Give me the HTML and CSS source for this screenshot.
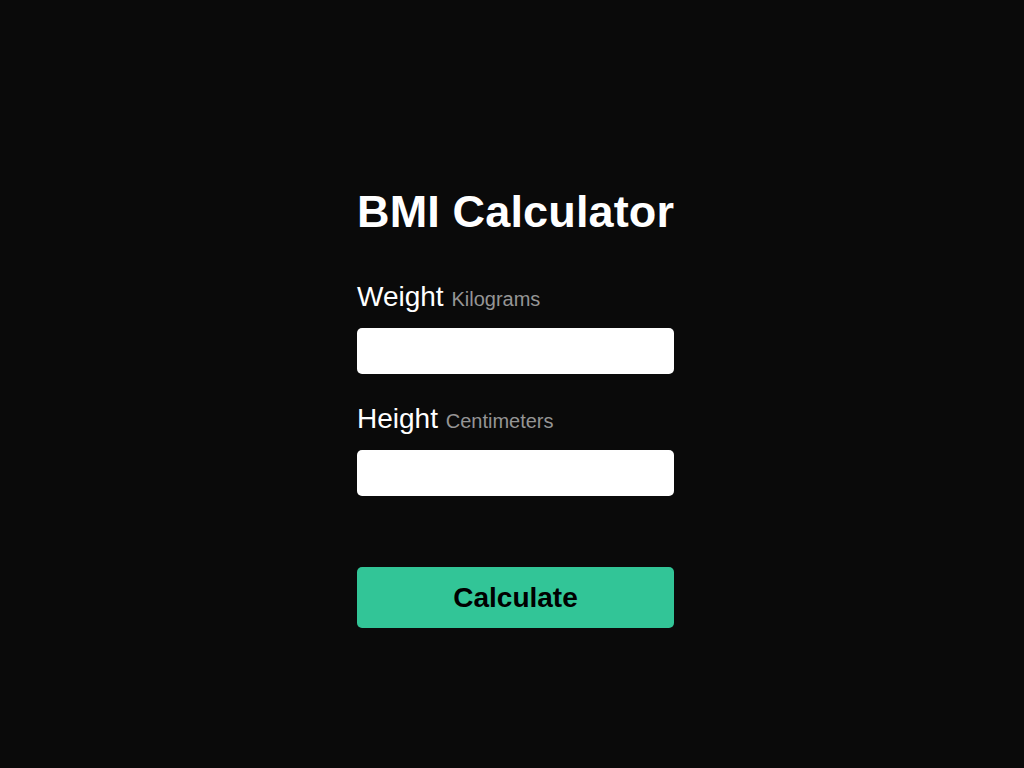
FILE: index.html
```html
<!DOCTYPE html>
<html lang="en">
<head>
<meta charset="utf-8">
<title>BMI Calculator</title>
<link rel="stylesheet" href="styles.css">
</head>
<body>
<main class="page">
  <form class="calc">
    <h1 class="title">BMI Calculator</h1>
    <div class="field">
      <label class="label" for="weight">Weight <span class="hint">Kilograms</span></label>
      <input class="input" id="weight" type="text">
    </div>
    <div class="field">
      <label class="label" for="height">Height <span class="hint">Centimeters</span></label>
      <input class="input" id="height" type="text">
    </div>
    <button class="button" type="button">Calculate</button>
  </form>
</main>
</body>
</html>
```
FILE: styles.css
```css
html, body {
  margin: 0;
  padding: 0;
  background: #0a0a0a;
}

body {
  font-family: "Liberation Sans", Arial, Helvetica, sans-serif;
  color: #ffffff;
}

.page {
  display: flex;
  justify-content: center;
  padding: 189px 0 0 7px;
  min-height: 100vh;
  box-sizing: border-box;
}

.calc {
  width: 317px;
  display: flex;
  flex-direction: column;
}

.title {
  margin: 0 0 49px;
  font-size: 45px;
  line-height: 1;
  font-weight: 700;
  letter-spacing: 0.15px;
  color: #ffffff;
  white-space: nowrap;
}

.field {
  display: flex;
  flex-direction: column;
  gap: 17px;
  margin-bottom: 31px;
}

.field + .field {
  margin-bottom: 0;
}

.label {
  font-size: 28px;
  line-height: 1;
  height: 28px;
  color: #ffffff;
}

.hint {
  font-size: 20px;
  color: #959595;
}

.input {
  display: block;
  width: 100%;
  height: 46px;
  box-sizing: border-box;
  border: none;
  border-radius: 5px;
  background: #ffffff;
  margin: 0;
  padding: 0 12px;
  font-family: inherit;
  font-size: 18px;
}

.button {
  margin-top: 71px;
  height: 61px;
  width: 100%;
  border: none;
  border-radius: 5px;
  background: #32c597;
  color: #000000;
  font-family: "Liberation Sans", Arial, Helvetica, sans-serif;
  font-size: 28px;
  font-weight: 700;
  line-height: 1;
  padding: 0;
  cursor: pointer;
}
```
